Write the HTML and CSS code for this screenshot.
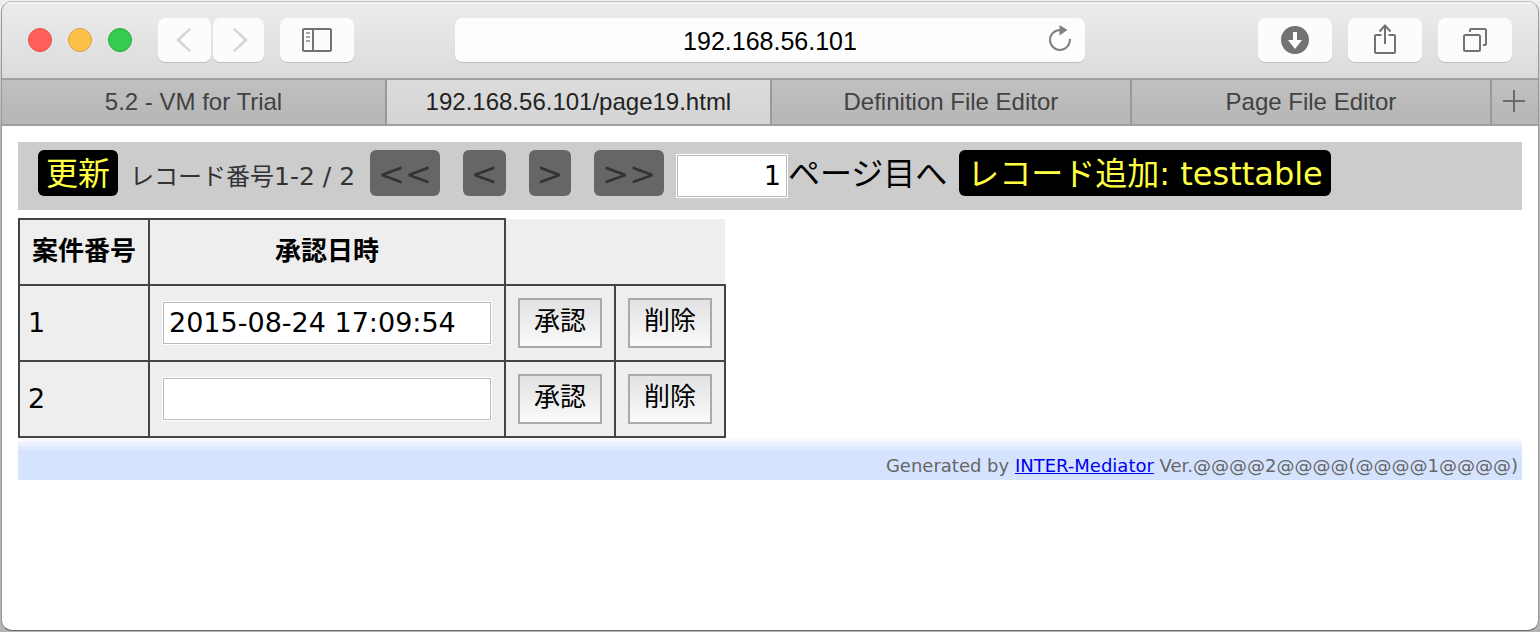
FILE: index.html
```html
<!DOCTYPE html>
<html lang="ja">
<head>
<meta charset="utf-8">
<title>192.168.56.101/page19.html</title>
<link rel="stylesheet" href="styles.css">
</head>
<body>
<div class="window">
  <header class="toolbar">
    <div class="side">
      <div class="lights">
        <button class="light close" aria-label="Close"></button>
        <button class="light minimize" aria-label="Minimize"></button>
        <button class="light zoom" aria-label="Zoom"></button>
      </div>
      <div class="history">
        <button class="tool back" aria-label="Back" disabled>
          <svg width="24" height="24" fill="none" stroke="#d6d6d6" stroke-width="2.6" stroke-linecap="round"><path d="M16.5 1.5 5 12l11.500 10.500"/></svg>
        </button>
        <button class="tool forward" aria-label="Forward" disabled>
          <svg width="24" height="24" fill="none" stroke="#d6d6d6" stroke-width="2.6" stroke-linecap="round"><path d="M7.500 1.500 19 12 7.500 22.500"/></svg>
        </button>
      </div>
      <button class="tool" aria-label="Sidebar">
        <svg width="30" height="24" fill="none" stroke="#737373" stroke-width="2"><rect x="1" y="1" width="28" height="22" rx="1"/><path d="M11 1v22"/><path d="M4 5h4M4 9h4M4 13h4" stroke="#a6a6a6"/></svg>
      </button>
    </div>
    <div class="address">
      <input class="address-input" type="text" value="192.168.56.101" aria-label="Address">
      <button class="reload" aria-label="Reload">
        <svg width="24" height="28" fill="none" stroke="#808080" stroke-width="2"><path d="M12.500 5C6 5 2 9.500 2 15c0 5.500 4.500 10 10 10s10-4.500 10-11"/><path d="M11.500 0v10.500L19.500 5z" fill="#808080" stroke="none"/></svg>
      </button>
    </div>
    <div class="side side-end">
      <button class="tool" aria-label="Downloads">
        <svg width="28" height="28"><circle cx="14" cy="14" r="14" fill="#737373"/><path d="M12 6h4v8h5l-7 9-7-9h5z" fill="#fff"/></svg>
      </button>
      <button class="tool" aria-label="Share">
        <svg width="24" height="32" fill="none" stroke="#737373" stroke-width="2"><path d="M8.500 11H3a1 1 0 0 0-1 1v16a1 1 0 0 0 1 1h18a1 1 0 0 0 1-1V12a1 1 0 0 0-1-1h-5.500"/><path d="M12 20V1.500M6.500 7.500 12 1.500l5.500 6"/></svg>
      </button>
      <button class="tool" aria-label="Show all tabs">
        <svg width="26" height="26" fill="none" stroke="#737373" stroke-width="2"><rect x="2" y="8" width="16" height="16" rx="1.500"/><path d="M8 5V3a1 1 0 0 1 1-1h14a1 1 0 0 1 1 1v14a1 1 0 0 1-1 1h-2"/></svg>
      </button>
    </div>
  </header>

  <nav class="tabs">
    <button class="tab wide">5.2 - VM for Trial</button>
    <button class="tab wide active">192.168.56.101/page19.html</button>
    <button class="tab">Definition File Editor</button>
    <button class="tab">Page File Editor</button>
    <button class="tab-add" aria-label="New tab">
      <svg width="22" height="22" stroke="#6b6b6b" stroke-width="2"><path d="M11 0v22M0 11h22"/></svg>
    </button>
  </nav>

  <main class="page">
    <div class="navigator">
      <button class="command">更新</button>
      <span class="record-info">レコード番号<span class="record-range">1-2 / 2</span></span>
      <div class="pager">
        <button class="command" disabled>&lt;&lt;</button>
        <button class="command" disabled>&lt;</button>
        <button class="command" disabled>&gt;</button>
        <button class="command" disabled>&gt;&gt;</button>
      </div>
      <div class="jump">
        <input class="field page-number" id="page-number" type="text" value="1">
        <label for="page-number">ページ目へ</label>
      </div>
      <button class="command">レコード追加: testtable</button>
    </div>

    <table class="records">
      <thead>
        <tr><th>案件番号</th><th>承認日時</th><td class="blank" colspan="2"></td></tr>
      </thead>
      <tbody>
        <tr>
          <td class="number">1</td>
          <td><input class="field date" type="text" value="2015-08-24 17:09:54" aria-label="承認日時 1"></td>
          <td><button class="action">承認</button></td>
          <td><button class="action">削除</button></td>
        </tr>
        <tr>
          <td class="number">2</td>
          <td><input class="field date" type="text" value="" aria-label="承認日時 2"></td>
          <td><button class="action">承認</button></td>
          <td><button class="action">削除</button></td>
        </tr>
      </tbody>
    </table>

    <footer class="credit">Generated by <a href="#">INTER-Mediator</a> Ver.@@@@2@@@@(@@@@1@@@@)</footer>
  </main>
</div>
</body>
</html>
```

FILE: styles.css
```css
* {
  box-sizing: border-box;
}

body {
  margin: 0;
  min-height: 100vh;
  padding: 1px;
  display: flex;
  background: linear-gradient(#f0f0f0, #b4b4b4 130px, #b4b4b4);
  font-family: "DejaVu Sans", "Noto Sans CJK JP", sans-serif;
  color: #000;
}

button,
input {
  margin: 0;
  padding: 0;
  border: 0;
  font-family: inherit;
  color: inherit;
}

svg {
  display: block;
}

.window {
  flex: 1;
  display: flex;
  flex-direction: column;
  overflow: hidden;
  border: 1px solid #999;
  border-top-color: #bdbdbd;
  border-bottom-color: #6e6e6e;
  border-radius: 11px;
  background: #fff;
}

/* Browser toolbar */

.toolbar {
  display: flex;
  align-items: center;
  height: 76px;
  padding: 0 26px;
  background: linear-gradient(#ececec, #dbdbdb);
  box-shadow: inset 0 2px #f4f4f4;
  font-family: "Liberation Sans", Arial, sans-serif;
}

.side {
  flex: 1;
  display: flex;
  align-items: center;
  gap: 16px;
}

.side-end {
  justify-content: flex-end;
}

.lights {
  display: flex;
  gap: 16px;
  margin-right: 10px;
}

.light {
  width: 24px;
  height: 24px;
  border: 1px solid;
  border-radius: 50%;
}

.close {
  background: #ff605c;
  border-color: #e2504d;
}

.minimize {
  background: #ffc04a;
  border-color: #e0a03c;
}

.zoom {
  background: #34cb50;
  border-color: #27ac3e;
}

.history {
  display: flex;
  gap: 2px;
}

.tool {
  display: flex;
  align-items: center;
  justify-content: center;
  width: 74px;
  height: 44px;
  border-radius: 7px;
  background: #fcfcfc;
  box-shadow: 0 1px #c0c0c0;
}

.back {
  width: 53px;
}

.forward {
  width: 51px;
}

.address {
  position: relative;
  flex: 0 1 630px;
}

.address-input {
  display: block;
  width: 100%;
  height: 44px;
  padding-top: 2px;
  border-radius: 7px;
  background: #fdfdfd;
  box-shadow: 0 1px #c0c0c0;
  font-size: 25px;
  text-align: center;
}

.reload {
  position: absolute;
  top: 7px;
  right: 13px;
  background: none;
}

/* Tab strip */

.tabs {
  display: flex;
  height: 48px;
  border-top: 2px solid #a0a0a0;
  border-bottom: 2px solid #a0a0a0;
  background: linear-gradient(#c0c0c0, #b6b6b6);
  font-family: "Liberation Sans", Arial, sans-serif;
}

.tab {
  flex: 360 1 0;
  border-right: 2px solid #999;
  background: none;
  color: #424242;
  font-size: 24px;
}

.wide {
  flex-grow: 385;
}

.active {
  background: linear-gradient(#dcdcdc, #d4d4d4);
  color: #222;
}

.tab-add {
  display: flex;
  align-items: center;
  justify-content: center;
  width: 46px;
  padding: 0 2px 2px 0;
  background: none;
}

/* Page */

.page {
  padding: 16px;
}

.navigator {
  display: flex;
  align-items: baseline;
  gap: 12px;
  padding: 8px 20px 12px;
  margin-bottom: 8px;
  background: #ccc;
  font-size: 32px;
  line-height: 40px;
  white-space: nowrap;
}

.command {
  height: 46px;
  padding: 2px 8px 0;
  border-radius: 6px;
  background: #000;
  color: #ff4;
  font-size: 32px;
  line-height: 44px;
}

.command:disabled {
  background: #666;
  color: #333;
}

.record-info {
  margin-right: 3px;
  color: #333;
  font-size: 24px;
}

.record-range {
  font-size: 25px;
}

.pager {
  display: flex;
  gap: 23px;
}

.jump {
  display: flex;
  align-items: baseline;
}

.field {
  height: 44px;
  padding: 0 6px;
  border: 1px solid #fff;
  background: #fff;
  box-shadow: inset 0 0 0 1px #bbb;
  font-size: 27px;
}

.page-number {
  width: 112px;
  text-align: right;
}

.records {
  border-collapse: collapse;
  font-size: 27px;
}

.records th,
.records td {
  height: 76px;
  padding: 0 12px;
  border: 2px solid #444;
  background: #eee;
}

.records th {
  height: 66px;
  padding-bottom: 6px;
  font-size: 26px;
}

.records .blank {
  height: 66px;
  border-width: 0 0 2px;
}

.records .number {
  padding: 0 8px;
}

.date {
  display: block;
  width: 330px;
}

.action {
  display: block;
  width: 84px;
  height: 50px;
  padding-bottom: 8px;
  border: 2px solid #aaa;
  background: linear-gradient(#e2e2e2, #fafafa);
  font-size: 26px;
}

.credit {
  padding: 14px 4px 0;
  height: 42px;
  background: linear-gradient(#f7f9ff 4px, #ebf1ff 4px 8px, #e0e9ff 8px 12px, #d6e3ff 12px);
  color: #666;
  font-size: 18px;
  line-height: 28px;
  text-align: right;
}

.credit a {
  color: #00e;
}
```
